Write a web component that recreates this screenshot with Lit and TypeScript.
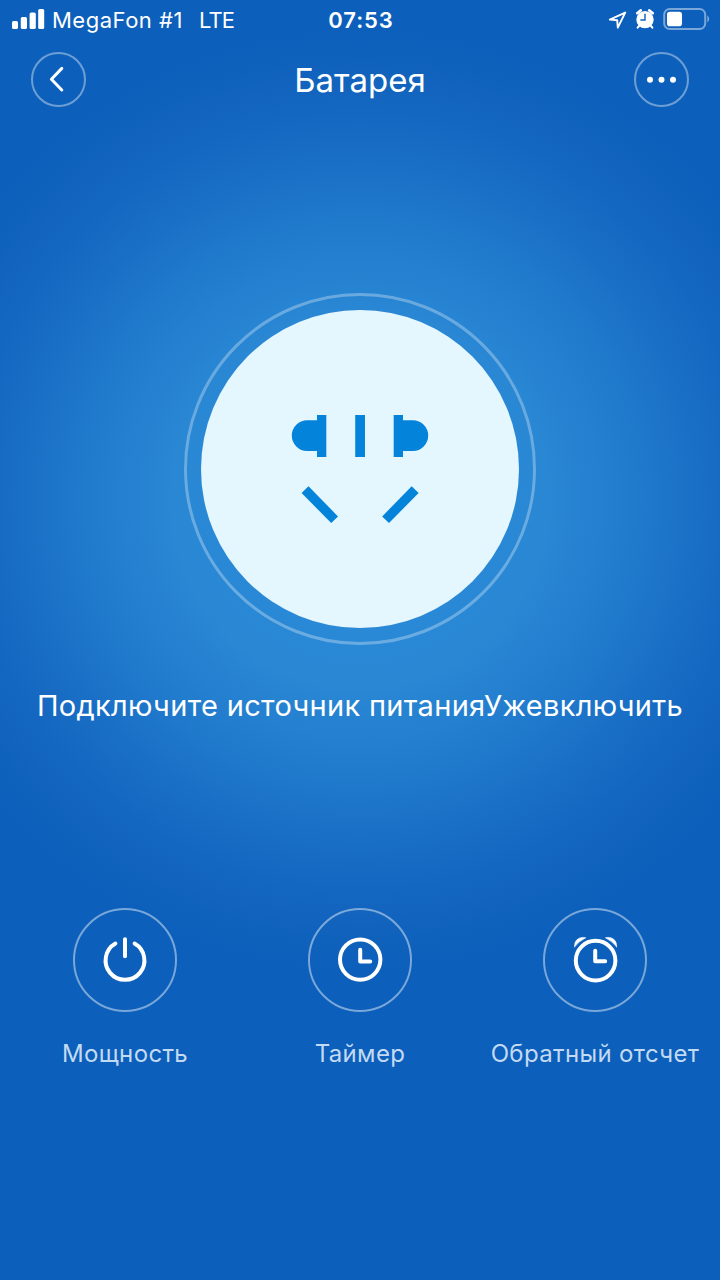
import { LitElement, html, css, svg } from "lit";
import { customElement, property } from "lit/decorators.js";

const powerIcon = svg`
  <path d="M14.4 7.6A19.4 19.4 0 1 0 33.6 7.6" stroke-width="4"/>
  <path d="M24 3.2V20.2" stroke-width="4"/>`;

const timerIcon = svg`
  <circle cx="24.2" cy="23.6" r="20.2" stroke-width="4"/>
  <path d="M24.2 13.8V25.4H34.2" stroke-width="4" stroke-linejoin="round"/>`;

const countdownIcon = svg`
  <path d="M3.6 10.8C3 4.2 8.4 0 14.8 1.8Q8.4 4.8 3.6 10.8Z" fill="#fff" stroke-width=".6"/>
  <path d="M45.6 10.8C46.2 4.2 40.8 0 34.4 1.8Q40.8 4.8 45.6 10.8Z" fill="#fff" stroke-width=".6"/>
  <circle cx="24.6" cy="24.6" r="19.8" stroke-width="4"/>
  <path d="M24.2 14.8V25.2H34.2" stroke-width="4" stroke-linejoin="round"/>`;

@customElement("action-button")
export class ActionButton extends LitElement {
  @property() label = "";
  @property({ attribute: false }) icon: unknown;

  static styles = css`
    :host {
      display: flex;
      flex-direction: column;
      align-items: center;
      gap: 22px;
    }
    .circle {
      box-sizing: border-box;
      width: 104px;
      height: 104px;
      border: 2px solid rgba(255, 255, 255, 0.45);
      border-radius: 50%;
      display: grid;
      place-items: center;
    }
    .icon {
      width: 49px;
      height: 49px;
      display: block;
    }
    .label {
      font-size: 24px;
      line-height: 40px;
      letter-spacing: 0.35px;
      white-space: nowrap;
      color: #c3daf3;
    }
  `;

  render() {
    return html`
      <div class="circle">
        <svg class="icon" viewBox="0 0 49 49" fill="none" stroke="#fff" stroke-linecap="round">${this.icon}</svg>
      </div>
      <div class="label">${this.label}</div>
    `;
  }
}

@customElement("app-root")
export class AppRoot extends LitElement {
  static styles = css`
    :host {
      box-sizing: border-box;
      display: flex;
      flex-direction: column;
      width: 720px;
      height: 1280px;
      overflow: hidden;
      color: #fff;
      font-family: Inter, "Liberation Sans", sans-serif;
      background: radial-gradient(circle 470px at 360px 500px,
        #2c8edb 0%, #2987d4 40%, #217bcd 58%, #186dc4 74%, #1264be 88%, #0c5fba 100%);
    }
    .status {
      display: grid;
      grid-template-columns: 1fr auto 1fr;
      align-items: center;
      height: 40px;
      padding: 0 10px 0 12px;
      font-size: 22px;
      line-height: 40px;
    }
    .carrier {
      display: flex;
      align-items: center;
    }
    .bars { width: 33px; height: 22px; margin-right: 7px; }
    .name { letter-spacing: 0.5px; margin-right: 16px; }
    .network { letter-spacing: -0.8px; }
    .time { font-weight: 600; letter-spacing: 0.9px; }
    .indicators {
      display: flex;
      justify-content: flex-end;
    }
    .indicators svg { display: block; width: 104px; height: 24px; }
    .nav {
      display: flex;
      justify-content: space-between;
      align-items: center;
      height: 79px;
      padding: 0 31px;
      box-sizing: border-box;
    }
    .round {
      box-sizing: border-box;
      width: 55px;
      height: 55px;
      border: 2px solid rgba(255, 255, 255, 0.4);
      border-radius: 50%;
    }
    .round svg { display: block; width: 51px; height: 51px; }
    .title {
      padding-top: 1px;
      font-size: 33px;
      line-height: 40px;
      letter-spacing: 0;
    }
    .hero {
      display: flex;
      flex-direction: column;
      align-items: center;
      padding-top: 174px;
    }
    .ring {
      box-sizing: border-box;
      width: 352px;
      height: 352px;
      border: 3px solid rgba(255, 255, 255, 0.3);
      border-radius: 50%;
      display: grid;
      place-items: center;
    }
    .disc {
      width: 318px;
      height: 318px;
      border-radius: 50%;
      background: #e4f6fe;
    }
    .disc svg { display: block; width: 318px; height: 318px; }
    .message {
      margin-top: 41px;
      font-size: 29px;
      line-height: 40px;
      letter-spacing: 0.32px;
      white-space: nowrap;
    }
    .actions {
      display: grid;
      grid-template-columns: repeat(3, 235px);
      justify-content: center;
      padding-top: 182px;
    }
  `;

  render() {
    return html`
      <div class="status">
        <div class="carrier">
          <svg class="bars" viewBox="0 0 33 22" fill="#fff">
            <rect x="0" y="12" width="6" height="8" rx="1.6"/>
            <rect x="8.8" y="8" width="6.2" height="12" rx="1.6"/>
            <rect x="17.6" y="3.5" width="6.2" height="16.5" rx="1.6"/>
            <rect x="26.2" y="0" width="6" height="20" rx="1.6"/>
          </svg>
          <span class="name">MegaFon #1</span>
          <span class="network">LTE</span>
        </div>
        <div class="time">07:53</div>
        <div class="indicators">
          <svg viewBox="606 7 104 24" fill="none">
            <path d="M609.8 18.6L625.2 11.6L617.8 26.6L617.2 19.2Z" stroke="#fff" stroke-width="1.9" stroke-linejoin="round"/>
            <circle cx="645" cy="18.6" r="8.7" fill="#fff"/>
            <path d="M637.2 12.2L640.8 9.4M652.8 12.2L649.2 9.4" stroke="#fff" stroke-width="2.6" stroke-linecap="round"/>
            <path d="M639.5 24.5L637.6 26.7M650.5 24.5L652.4 26.7" stroke="#fff" stroke-width="2" stroke-linecap="round"/>
            <path d="M645 12.8V19H640.4" stroke="#0d60bb" stroke-width="1.4"/>
            <rect x="664.2" y="8" width="41" height="20" rx="5.5" stroke="#fff" stroke-opacity=".45" stroke-width="2"/>
            <rect x="667" y="10.8" width="15" height="14.4" rx="2.8" fill="#fff"/>
            <path d="M707.4 14.6C709.6 16 709.6 20 707.4 21.4Z" fill="#fff" fill-opacity=".5"/>
          </svg>
        </div>
      </div>

      <div class="nav">
        <div class="round">
          <svg viewBox="0 0 51 51" fill="none" stroke="#fff" stroke-width="3" stroke-linecap="round" stroke-linejoin="round">
            <path d="M28.8 14.4L18.4 25.2L28.8 36"/>
          </svg>
        </div>
        <div class="title">Батарея</div>
        <div class="round">
          <svg viewBox="0 0 51 51" fill="#fff">
            <circle cx="14" cy="25.8" r="3"/>
            <circle cx="25.5" cy="25.8" r="3"/>
            <circle cx="37" cy="25.8" r="3"/>
          </svg>
        </div>
      </div>

      <div class="hero">
        <div class="ring">
          <div class="disc">
            <svg viewBox="201 310 318 318" fill="#0383da">
              <path d="M317 415H326.3V457H317V451H307.2A15.4 15.4 0 0 1 307.2 420.2H317Z"/>
              <path d="M355.2 415H365V457H355.2Z"/>
              <path d="M403 415H393.7V457H403V451H412.8A15.4 15.4 0 0 0 412.8 420.2H403Z"/>
              <path d="M308.5 486.3L338 516.4L331.2 523L301.6 493Z"/>
              <path d="M411.7 486.3L382.2 516.4L389 523L418.6 493Z"/>
            </svg>
          </div>
        </div>
        <div class="message">Подключите источник питанияУжевключить</div>
      </div>

      <div class="actions">
        <action-button label="Мощность" .icon=${powerIcon}></action-button>
        <action-button label="Таймер" .icon=${timerIcon}></action-button>
        <action-button label="Обратный отсчет" .icon=${countdownIcon}></action-button>
      </div>
    `;
  }
}
